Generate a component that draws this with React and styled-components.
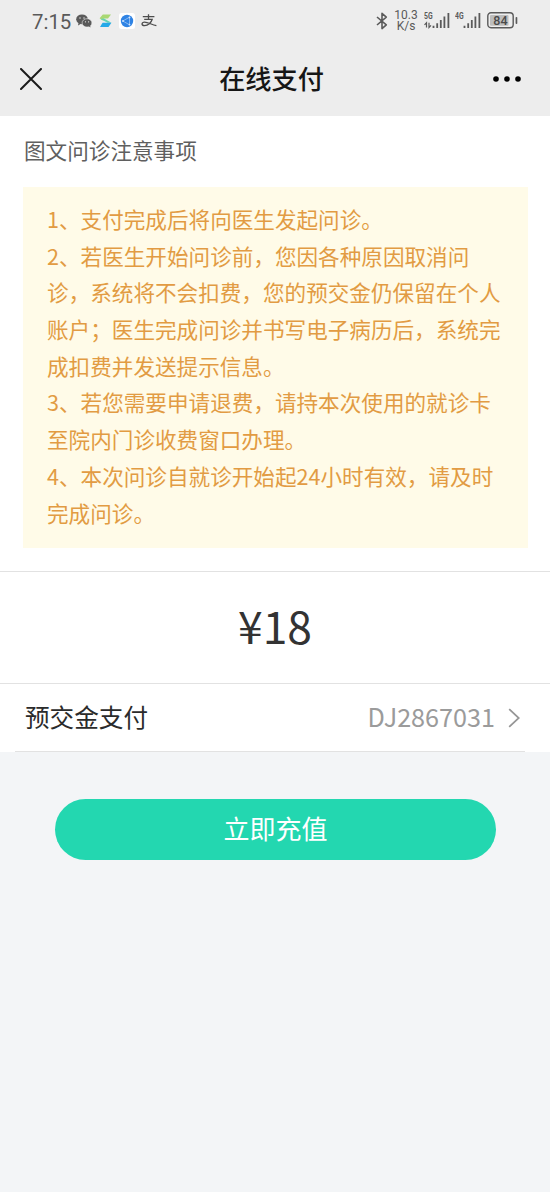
import React from 'react';
import styled, { createGlobalStyle } from 'styled-components';


const GlobalStyle = createGlobalStyle`
	* {
		box-sizing: border-box;
	}

	body {
		margin: 0;
		background-color: #f3f5f7;
		font-family: "Noto Sans CJK SC", "Noto Sans", sans-serif;
	}
`;

const Page = styled.div`
	/* Display & Box Model */
	display: flex;
	flex-direction: column;
	min-height: 1192px;
	overflow: hidden;

	/* Color */
	background-color: #f3f5f7;
`;

const Header = styled.header`
	height: 116px;
	background-color: #ededed;
`;

const StatusBar = styled.div`
	/* Display & Box Model */
	display: flex;
	justify-content: space-between;
	align-items: center;
	height: 41px;
	padding: 0 32px 0 32px;

	/* Color */
	color: #5a5a5a;

	/* Text */
	font-family: Roboto, sans-serif;
`;

const StatusGroup = styled.div`
	display: flex;
	align-items: center;
`;

const Time = styled.span`
	width: 44px;
	padding-top: 2px;
	font-size: 20.4px;
	line-height: 24px;
`;

const Glyph = styled.svg`
	display: block;
	flex: none;
	width: ${props => props.$width}px;
	height: ${props => props.$height}px;
	margin-left: ${props => props.$gap || 0}px;
`;

const Speed = styled.div`
	/* Display & Box Model */
	display: flex;
	flex-direction: column;
	align-items: center;
	width: 24px;
	margin-left: 6px;
	padding-top: 1px;

	/* Text */
	font-size: 12px;
	line-height: 11px;
`;

const NetLabel = styled.text`
	fill: #5a5a5a;
	font-family: Roboto, sans-serif;
	font-size: 9px;
	font-weight: 700;
`;

const BatteryLabel = styled.text`
	fill: #4a4a4a;
	font-family: Roboto, sans-serif;
	font-size: 12.5px;
	font-weight: 500;
	text-anchor: middle;
`;

const NavBar = styled.div`
	/* Display & Box Model */
	display: flex;
	justify-content: space-between;
	align-items: center;
	height: 75px;
	padding: 0 29px 0 20px;
`;

const Title = styled.h1`
	/* Display & Box Model */
	margin: 0;
	padding: 0 0 2px 8px;

	/* Text */
	color: #161616;
	font-size: 26.2px;
	font-weight: 500;
	line-height: 40px;
`;

const Notice = styled.section`
	height: 456px;
	padding: 18px 22px 0 23px;
	border-bottom: 1px solid #e2e2e2;
	background-color: #fff;
`;

const NoticeTitle = styled.h2`
	margin: 0 0 21px 1px;
	color: #5f5f5f;
	font-size: 21.6px;
	font-weight: 400;
	line-height: 32px;
`;

const NoticeBox = styled.div`
	/* Display & Box Model */
	height: 361px;
	padding: 14px 0 0 24px;

	/* Color */
	background-color: #fffbe8;
	color: #e29b43;

	/* Text */
	font-size: 21.6px;
	line-height: 36.7px;
	white-space: nowrap;
`;

const NoticeLine = styled.div`
	height: 36.7px;
`;

const Price = styled.section`
	/* Display & Box Model */
	display: flex;
	justify-content: center;
	align-items: center;
	height: 112px;
	padding-bottom: 6px;
	border-bottom: 1px solid #e2e2e2;

	/* Color */
	background-color: #fff;
	color: #333;

	/* Text */
	font-size: 44.4px;
`;

const PayRow = styled.section`
	height: 68px;
	padding: 0 25px 0 15px;
	background-color: #fff;
`;

const PayCell = styled.div`
	/* Display & Box Model */
	display: flex;
	align-items: center;
	height: 68px;
	padding: 0 5px 0 10px;
	border-bottom: 1px solid #e2e2e2;

	/* Text */
	color: #2b2b2b;
	font-size: 24.6px;
`;

const PayLabel = styled.span`
	padding-bottom: 3px;
`;

const Account = styled.span`
	margin-left: auto;
	padding-bottom: 3px;
	color: #9b9b9b;
	font-size: 25.2px;
	font-weight: 400;
`;

const RechargeButton = styled.button`
	/* Display & Box Model */
	height: 61px;
	margin: 47px 54px 0 55px;
	padding: 0 0 4px;
	border: 0;
	border-radius: 31px;

	/* Color */
	background-color: #23d7b0;
	color: #fff;

	/* Text */
	font-family: inherit;
	font-size: 26px;
`;


const notices = [
	'1、支付完成后将向医生发起问诊。',
	'2、若医生开始问诊前，您因各种原因取消问',
	'诊，系统将不会扣费，您的预交金仍保留在个人',
	'账户；医生完成问诊并书写电子病历后，系统完',
	'成扣费并发送提示信息。',
	'3、若您需要申请退费，请持本次使用的就诊卡',
	'至院内门诊收费窗口办理。',
	'4、本次问诊自就诊开始起24小时有效，请及时',
	'完成问诊。',
];

const WechatIcon = () => (
	<Glyph $width={16} $height={14} viewBox="0 0 16 14">
		<ellipse cx="6" cy="5.3" rx="5.8" ry="4.9" fill="#5a5a5a" />
		<path d="M2.6 8.5 L2 11.5 L5 9.8Z" fill="#5a5a5a" />
		<ellipse cx="11" cy="8.9" rx="4.9" ry="4.2" fill="#5a5a5a" stroke="#ededed" strokeWidth="0.6" />
		<path d="M12.5 12 L14.4 13.6 L14.2 11.2Z" fill="#5a5a5a" />
		<g fill="#ededed">
			<circle cx="4" cy="4" r="0.7" />
			<circle cx="8" cy="4" r="0.7" />
			<circle cx="9.5" cy="7.8" r="0.6" />
			<circle cx="12.6" cy="7.8" r="0.6" />
		</g>
	</Glyph>
);

const RibbonIcon = () => (
	<Glyph $width={13} $height={14} $gap={7} viewBox="0 0 13 14">
		<path d="M3.8 0.5H12L9 4.4H4.5L6.5 6.2H3.2L0.6 4.2Z" fill="#a9d873" />
		<path d="M1.5 4.9L5 4.4L12.4 8.8H8.5Z" fill="#63d3b4" />
		<path d="M3.6 8.8H12.4L9.5 13H1Z" fill="#25a9e8" />
	</Glyph>
);

const NetworkIcon = () => (
	<Glyph $width={16} $height={16} $gap={7} viewBox="0 0 16 16">
		<rect width="16" height="16" rx="2.5" fill="#fff" />
		<circle cx="8" cy="8" r="6.2" fill="#2f83e4" />
		<path d="M3.8 8 L10.5 4.2 V11.8Z" fill="none" stroke="#a9cdf8" strokeWidth="0.7" />
		<g fill="#d6e7fd">
			<circle cx="4" cy="8" r="0.9" />
			<circle cx="10.5" cy="4.4" r="0.9" />
			<circle cx="10.5" cy="11.6" r="0.9" />
		</g>
	</Glyph>
);

const AlipayIcon = () => (
	<Glyph $width={16} $height={13} $gap={6} viewBox="0 0 16 13">
		<path
			d="M1.8 2.7H13.4 M7.5 0.2V5.3 M3.2 5.3H11.2C10.2 8.8 7 11.6 3.6 11.6C0.2 11.6 0.2 8.2 3.6 8.2C7 8.2 10.5 10.6 15.4 11.6"
			fill="none"
			stroke="#4d4d4d"
			strokeWidth="1.3"
		/>
	</Glyph>
);

const BluetoothIcon = () => (
	<Glyph $width={12} $height={18} viewBox="0 0 12 18">
		<path
			d="M1 5L10.3 12.9L6 16.6V1.4L10.3 5.1L1 13"
			fill="none"
			stroke="#5a5a5a"
			strokeWidth="1.6"
			strokeLinejoin="round"
		/>
	</Glyph>
);

const SignalIcon = ({ label, arrows, gap }) => (
	<Glyph $width={26} $height={17} $gap={gap} viewBox="0 0 26 17">
		<NetLabel x="0" y="7.2" textLength="8.6" lengthAdjust="spacingAndGlyphs">{label}</NetLabel>
		{arrows && <path d="M2.5 15.5V10.8L0.5 12.8 M5 10.8V15.5L7 13.4" fill="none" stroke="#5a5a5a" strokeWidth="1.2" />}
		<path
			d="M9.5 13.8V16 M13.2 11.2V16 M16.8 8V16 M20.4 4.6V16 M24.4 1V16"
			fill="none"
			stroke="#5a5a5a"
			strokeWidth="1.8"
		/>
	</Glyph>
);

const BatteryIcon = () => (
	<Glyph $width={31} $height={17} $gap={6} viewBox="0 0 31 17">
		<rect x="0.8" y="0.8" width="25.4" height="15" rx="3.2" fill="none" stroke="#5a5a5a" strokeWidth="1.4" />
		<rect x="3" y="3" width="18.5" height="10.8" rx="1" fill="#bdbdbd" />
		<rect x="28.6" y="5" width="1.7" height="7" rx="0.8" fill="#5a5a5a" />
		<BatteryLabel x="13.4" y="12.8">84</BatteryLabel>
	</Glyph>
);

const CloseIcon = () => (
	<Glyph $width={22} $height={22} viewBox="0 0 22 22">
		<path d="M1 1L21 21M21 1L1 21" fill="none" stroke="#1b1b1b" strokeWidth="2" strokeLinecap="round" />
	</Glyph>
);

const MoreIcon = () => (
	<Glyph $width={28} $height={6} viewBox="0 0 28 6">
		<circle cx="3" cy="3" r="2.8" />
		<circle cx="14" cy="3" r="2.8" />
		<circle cx="25" cy="3" r="2.8" />
	</Glyph>
);

const ChevronIcon = () => (
	<Glyph $width={12} $height={20} $gap={13} viewBox="0 0 12 20">
		<path d="M1.2 1.2L10.8 10L1.2 18.8" fill="none" stroke="#969696" strokeWidth="1.8" />
	</Glyph>
);

const App = () => (
	<Page>
		<GlobalStyle />
		<Header>
			<StatusBar>
				<StatusGroup>
					<Time>7:15</Time>
					<WechatIcon />
					<RibbonIcon />
					<NetworkIcon />
					<AlipayIcon />
				</StatusGroup>
				<StatusGroup>
					<BluetoothIcon />
					<Speed>
						<span>10.3</span>
						<span>K/s</span>
					</Speed>
					<SignalIcon label="5G" arrows gap={6} />
					<SignalIcon label="4G" gap={5} />
					<BatteryIcon />
				</StatusGroup>
			</StatusBar>
			<NavBar>
				<CloseIcon />
				<Title>在线支付</Title>
				<MoreIcon />
			</NavBar>
		</Header>
		<Notice>
			<NoticeTitle>图文问诊注意事项</NoticeTitle>
			<NoticeBox>
				{notices.map(line => <NoticeLine key={line}>{line}</NoticeLine>)}
			</NoticeBox>
		</Notice>
		<Price>¥18</Price>
		<PayRow>
			<PayCell>
				<PayLabel>预交金支付</PayLabel>
				<Account>DJ2867031</Account>
				<ChevronIcon />
			</PayCell>
		</PayRow>
		<RechargeButton>立即充值</RechargeButton>
	</Page>
);

export default App;
